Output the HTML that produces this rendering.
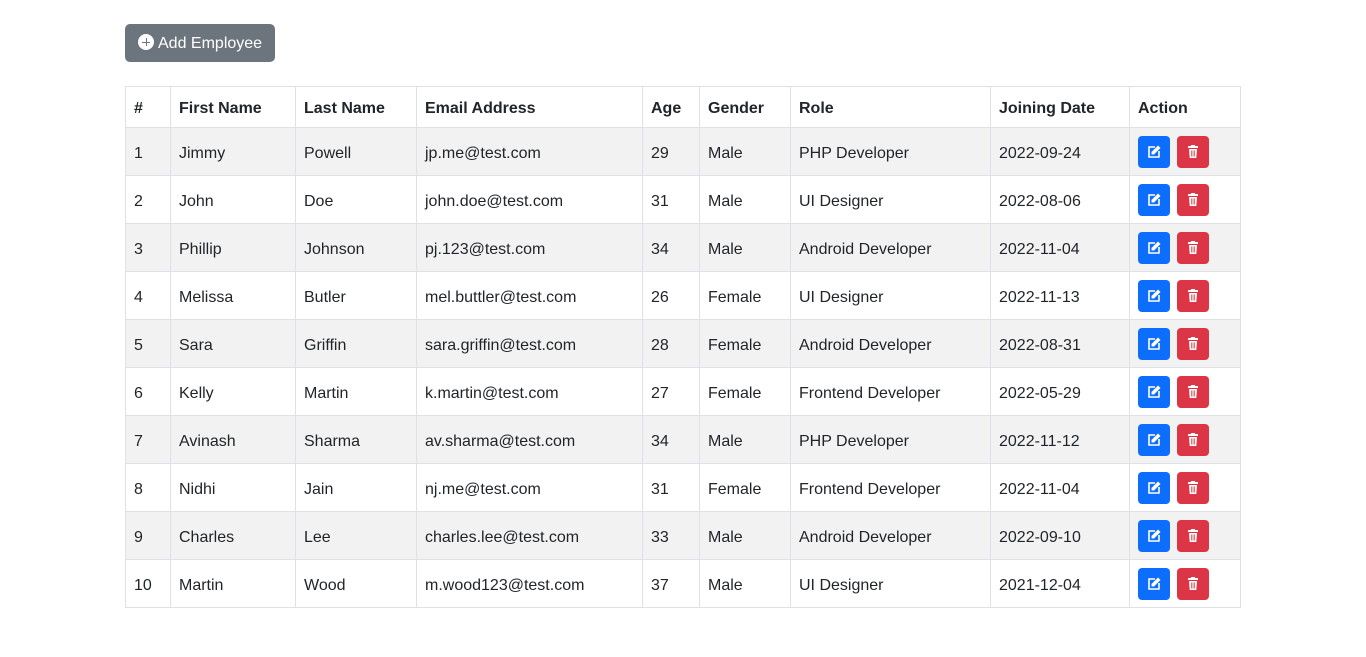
<!DOCTYPE html>
<html><head><style>
body{margin:0;background:#fff;font-family:"Liberation Sans",sans-serif;color:#212529;font-size:16px}
.btn{position:absolute;left:125px;top:24px;width:150px;height:38px;background:#6c757d;border-radius:5px;color:#fff;font-size:16px;line-height:40px;box-sizing:border-box;padding-left:13px}
.btn i{display:inline-block;width:16px;height:16px;border-radius:50%;background:#fff;vertical-align:-2px;margin-right:4px;position:relative}
.btn i:before{content:"";position:absolute;left:4px;top:7.5px;width:8px;height:1px;background:#6c757d}
.btn i:after{content:"";position:absolute;left:7.5px;top:4px;width:1px;height:8px;background:#6c757d}
table{position:absolute;left:125px;top:86px;border-collapse:collapse;width:1115px;table-layout:fixed}
td,th{border:1px solid #dee2e6;padding:0 8px;text-align:left;white-space:nowrap}
th{height:41px;font-weight:bold;padding-top:4px;box-sizing:border-box}
td{height:42px;padding-top:5px}
td:last-child{padding-top:1px;height:46px}
tbody tr:nth-child(odd) td{background:#f2f2f2}
.a{display:inline-block;width:32px;height:32px;border-radius:4px;vertical-align:middle;margin-right:7px;position:relative}
.e{background:#0d6efd}.d{background:#dc3545}
</style></head><body>
<div class="btn"><i></i>Add Employee</div>
<table>
<colgroup><col style="width:45px"><col style="width:125px"><col style="width:121px"><col style="width:226px"><col style="width:57px"><col style="width:91px"><col style="width:200px"><col style="width:139px"><col style="width:111px"></colgroup>
<thead><tr><th>#</th><th>First Name</th><th>Last Name</th><th>Email Address</th><th>Age</th><th>Gender</th><th>Role</th><th>Joining Date</th><th>Action</th></tr></thead>
<tbody>
<tr><td>1</td><td>Jimmy</td><td>Powell</td><td>jp.me@test.com</td><td>29</td><td>Male</td><td>PHP Developer</td><td>2022-09-24</td><td>A</td></tr>
<tr><td>2</td><td>John</td><td>Doe</td><td>john.doe@test.com</td><td>31</td><td>Male</td><td>UI Designer</td><td>2022-08-06</td><td>A</td></tr>
<tr><td>3</td><td>Phillip</td><td>Johnson</td><td>pj.123@test.com</td><td>34</td><td>Male</td><td>Android Developer</td><td>2022-11-04</td><td>A</td></tr>
<tr><td>4</td><td>Melissa</td><td>Butler</td><td>mel.buttler@test.com</td><td>26</td><td>Female</td><td>UI Designer</td><td>2022-11-13</td><td>A</td></tr>
<tr><td>5</td><td>Sara</td><td>Griffin</td><td>sara.griffin@test.com</td><td>28</td><td>Female</td><td>Android Developer</td><td>2022-08-31</td><td>A</td></tr>
<tr><td>6</td><td>Kelly</td><td>Martin</td><td>k.martin@test.com</td><td>27</td><td>Female</td><td>Frontend Developer</td><td>2022-05-29</td><td>A</td></tr>
<tr><td>7</td><td>Avinash</td><td>Sharma</td><td>av.sharma@test.com</td><td>34</td><td>Male</td><td>PHP Developer</td><td>2022-11-12</td><td>A</td></tr>
<tr><td>8</td><td>Nidhi</td><td>Jain</td><td>nj.me@test.com</td><td>31</td><td>Female</td><td>Frontend Developer</td><td>2022-11-04</td><td>A</td></tr>
<tr><td>9</td><td>Charles</td><td>Lee</td><td>charles.lee@test.com</td><td>33</td><td>Male</td><td>Android Developer</td><td>2022-09-10</td><td>A</td></tr>
<tr><td>10</td><td>Martin</td><td>Wood</td><td>m.wood123@test.com</td><td>37</td><td>Male</td><td>UI Designer</td><td>2021-12-04</td><td>A</td></tr>
</tbody></table>
<script>
document.querySelectorAll('tbody tr td:last-child').forEach(function(td){
td.innerHTML='<span class="a e"><svg width="32" height="32" viewBox="0 0 32 32"><path d="M17 11H11v10h10v-6" fill="none" stroke="#fff" stroke-width="1.6"/><path d="M20 9.5l2.5 2.5-6.5 6.5H13.5V16z" fill="#fff"/></svg></span><span class="a d"><svg width="32" height="32" viewBox="0 0 32 32"><rect x="11" y="10" width="10" height="2" fill="#fff"/><rect x="14" y="9" width="4" height="2" fill="#fff"/><path d="M12 13h8l-.7 9h-6.6z" fill="#fff"/><path d="M14.5 14.5v6M16 14.5v6M17.5 14.5v6" stroke="#dc3545" stroke-width=".7"/></svg></span>';
});
</script>
</body></html>
